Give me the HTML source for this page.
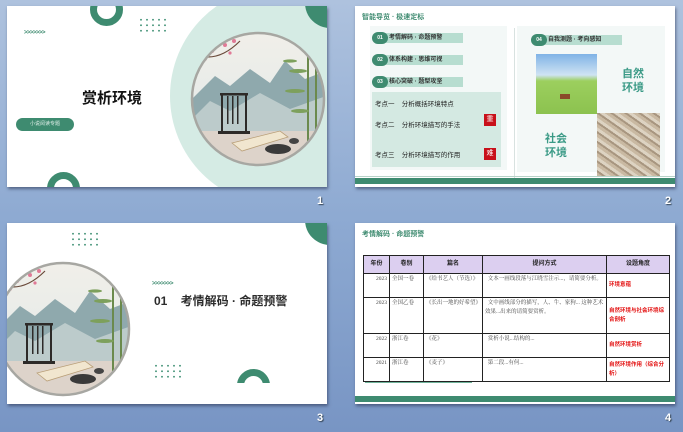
<!DOCTYPE html>
<html><head><meta charset="utf-8"><style>
*{margin:0;padding:0;box-sizing:border-box}
body{width:683px;height:432px;overflow:hidden;background:linear-gradient(180deg,#aec2de 0%,#8eaad2 50%,#7895c4 100%);font-family:"Liberation Sans","Noto Sans CJK SC",sans-serif;position:relative}
.s{position:absolute;width:320px;height:181px;background:#fff;overflow:hidden;box-shadow:1px 2px 3px rgba(40,50,80,.6)}
.a{position:absolute}
.num{position:absolute;color:#fff;font-weight:bold;font-size:11px;text-shadow:1px 1px 1px #345}
.ring{position:absolute;border-radius:50%;border:7px solid #3e8b70}
.dots{position:absolute;background-image:radial-gradient(circle,#4f9a80 0.8px,transparent 1.1px);background-size:6px 5.5px}
.arr{position:absolute;color:#3e8b70;font-size:6px;font-weight:bold;letter-spacing:-0.5px}
.pill{position:absolute;height:10px;background:#b7ddd0;font-size:6px;font-weight:bold;color:#333;line-height:10px;padding-left:17px;border-radius:5px 0 0 5px;white-space:nowrap}
.pill b{position:absolute;left:0;top:-1px;width:16px;height:12px;border-radius:6px;background:#3e8b70;color:#fff;font-size:5px;text-align:center;line-height:12px}
.k{position:absolute;font-size:6.5px;color:#222}
.red{position:absolute;width:12px;height:12px;background:#c8101a;color:#fff;font-size:7px;text-align:center;line-height:12px}
table{border-collapse:collapse;position:absolute;left:8px;top:32px;width:307px;font-size:5.5px;color:#444;font-family:"Liberation Serif","Noto Serif CJK SC",serif}
td,th{border:1.3px solid #222;vertical-align:top;padding:1px 2px;line-height:9px}
th{background:#dccff0;color:#222;font-size:6px;height:18px;vertical-align:middle;font-family:"Liberation Sans","Noto Sans CJK SC",sans-serif}
.r{color:#e31010;font-weight:bold;font-family:"Liberation Sans","Noto Sans CJK SC",sans-serif;vertical-align:middle}
</style></head><body>

<svg width="0" height="0" style="position:absolute"><defs>
<clipPath id="cp"><circle cx="68" cy="68" r="66"/></clipPath>
<linearGradient id="sky" x1="0" y1="0" x2="0" y2="1"><stop offset="0" stop-color="#f1efe9"/><stop offset="0.6" stop-color="#e6ebe9"/><stop offset="1" stop-color="#ddd6cf"/></linearGradient>
<g id="paint">
<g clip-path="url(#cp)">
<rect width="136" height="136" fill="url(#sky)"/>
<path d="M0 70 L25 45 L40 55 L60 38 L80 52 L95 30 L115 48 L136 40 V110 H0Z" fill="#8fa9ad"/>
<path d="M0 90 L20 70 L40 80 L70 62 L100 78 L136 65 V120 H0Z" fill="#bccbcb"/>
<rect y="100" width="136" height="36" fill="#ddd3ca"/>
<path d="M10 25 Q30 30 50 10 M20 22 L35 5" stroke="#6a4a3a" stroke-width="1.2" fill="none"/>
<g fill="#e07a96"><circle cx="22" cy="20" r="2"/><circle cx="35" cy="14" r="2"/><circle cx="44" cy="10" r="2"/><circle cx="28" cy="8" r="1.8"/><circle cx="15" cy="28" r="1.8"/><circle cx="40" cy="22" r="1.6"/></g>
<g stroke="#6b8a4d" stroke-width="2"><line x1="118" y1="20" x2="118" y2="110"/><line x1="126" y1="30" x2="126" y2="115"/></g>
<g fill="#7da05c"><ellipse cx="108" cy="40" rx="9" ry="2"/><ellipse cx="105" cy="60" rx="10" ry="2"/><ellipse cx="110" cy="80" rx="9" ry="2"/><ellipse cx="100" cy="30" rx="7" ry="1.6"/></g>
<g fill="#2d2a28"><rect x="30" y="62" width="28" height="2.5"/><rect x="31" y="62" width="2" height="40"/><rect x="55" y="62" width="2" height="40"/><rect x="37" y="65" width="1.5" height="28"/><rect x="42" y="65" width="1.5" height="28"/><rect x="47" y="65" width="1.5" height="28"/><rect x="28" y="100" width="32" height="3"/></g>
<path d="M42 112 L90 100 L98 106 L52 120Z" fill="#f1e6cf" stroke="#b99f78" stroke-width="0.8"/>
<ellipse cx="88" cy="118" rx="13" ry="5" fill="#3a3a3a"/>
<ellipse cx="104" cy="110" rx="5" ry="3" fill="#444"/>
</g>
<circle cx="68" cy="68" r="66" fill="none" stroke="#a7a7a2" stroke-width="2.5"/>
</g></defs></svg>

<!-- Slide 1 -->
<div class="s" style="left:7px;top:6px">
  <div class="a" style="left:163px;top:-20px;width:220px;height:220px;border-radius:50%;background:#d5ebe4"></div>
  <svg class="a" style="left:183px;top:25px" width="136" height="136"><use href="#paint"/></svg>
  <div class="a" style="left:298px;top:-28px;width:50px;height:50px;border-radius:50%;background:#3e8b70"></div>
  <div class="ring" style="left:83px;top:-13px;width:33px;height:33px"></div>
  <div class="ring" style="left:40px;top:166px;width:33px;height:33px"></div>
  <div class="dots" style="left:131px;top:11px;width:32px;height:18px"></div>
  <div class="arr" style="left:17px;top:24px">&gt;&gt;&gt;&gt;&gt;&gt;&gt;</div>
  <div class="a" style="left:75px;top:81px;font-size:15px;font-weight:bold;color:#111">赏析环境</div>
  <div class="a" style="left:9px;top:112px;width:58px;height:13px;border-radius:7px;background:#3e8b70;color:#e0efe9;font-size:5px;line-height:13px;text-align:center">小说阅读专题</div>
</div>
<div class="num" style="left:317px;top:195px">1</div>

<!-- Slide 2 -->
<div class="s" style="left:355px;top:6px">
  <div class="a" style="left:7px;top:6px;font-size:7px;font-weight:bold;color:#3e8b70">智能导览 · 极速定标</div>
  <div class="a" style="left:15px;top:20px;width:137px;height:144px;background:#f3f8f7"></div>
  <div class="a" style="left:159px;top:22px;width:1px;height:150px;background:#d8e2e0"></div>
  <div class="a" style="left:162px;top:20px;width:148px;height:146px;background:#f3f8f7"></div>
  <div class="pill" style="left:17px;top:27px;width:91px"><b>01</b>考情解码 · 命题预警</div>
  <div class="pill" style="left:17px;top:49px;width:91px"><b>02</b>体系构建 · 思维可视</div>
  <div class="pill" style="left:17px;top:71px;width:91px"><b>03</b>核心突破 · 题型攻坚</div>
  <div class="a" style="left:17px;top:86px;width:129px;height:75px;background:#d4e9e2"></div>
  <div class="k" style="left:20px;top:92px">考点一&nbsp;&nbsp;&nbsp;&nbsp;分析概括环境特点</div>
  <div class="k" style="left:20px;top:113px">考点二&nbsp;&nbsp;&nbsp;&nbsp;分析环境描写的手法</div>
  <div class="k" style="left:20px;top:143px">考点三&nbsp;&nbsp;&nbsp;&nbsp;分析环境描写的作用</div>
  <div class="red" style="left:129px;top:108px">重</div>
  <div class="red" style="left:129px;top:142px">难</div>
  <div class="pill" style="left:176px;top:29px;width:91px"><b>04</b>自我测题 · 考向感知</div>
  <div class="a" style="left:181px;top:48px;width:61px;height:60px;background:linear-gradient(180deg,#7fb3e6 0%,#cfe3f3 35%,#9ccf5e 45%,#8cc24f 100%)"><div class="a" style="left:24px;top:40px;width:10px;height:5px;background:#8a4a2a"></div></div>
  <div class="a" style="left:267px;top:61px;font-size:11px;font-weight:bold;color:#3a9a86;line-height:14px">自然<br>环境</div>
  <div class="a" style="left:242px;top:107px;width:63px;height:63px;background:repeating-linear-gradient(35deg,#c9b9a2 0 3px,#a89680 3px 5px,#ddd3c2 5px 8px)"></div>
  <div class="a" style="left:190px;top:126px;font-size:11px;font-weight:bold;color:#3a9a86;line-height:14px">社会<br>环境</div>
  <div class="a" style="left:0;top:170px;width:320px;height:1px;background:#b8d3c9"></div>
  <div class="a" style="left:0;top:172px;width:320px;height:6px;background:#3e8b70"></div>
</div>
<div class="num" style="left:665px;top:195px">2</div>

<!-- Slide 3 -->
<div class="s" style="left:7px;top:223px">
  <svg class="a" style="left:-12px;top:38px" width="136" height="136"><use href="#paint"/></svg>
  <div class="a" style="left:298px;top:-28px;width:50px;height:50px;border-radius:50%;background:#3e8b70"></div>
  <div class="dots" style="left:63px;top:8px;width:32px;height:18px"></div>
  <div class="dots" style="left:146px;top:140px;width:32px;height:18px"></div>
  <div class="arr" style="left:145px;top:58px">&gt;&gt;&gt;&gt;&gt;&gt;&gt;</div>
  <div class="a" style="left:147px;top:69px;font-size:12px;font-weight:bold;color:#2c2c2c;white-space:nowrap">01&nbsp;&nbsp;&nbsp;&nbsp;考情解码 · 命题预警</div>
  <div class="a" style="left:230px;top:146px;width:33px;height:14px;overflow:hidden"><div class="ring" style="left:0;top:0;width:33px;height:33px"></div></div>
</div>
<div class="num" style="left:317px;top:412px">3</div>

<!-- Slide 4 -->
<div class="s" style="left:355px;top:223px">
  <div class="a" style="left:7px;top:6px;font-size:7px;font-weight:bold;color:#3e8b70">考情解码 · 命题预警</div>
  <table>
    <tr><th style="width:26px">年份</th><th style="width:34px">卷别</th><th style="width:59px">篇名</th><th style="width:124px">提问方式</th><th>设题角度</th></tr>
    <tr style="height:24px"><td style="text-align:right">2023</td><td>全国一卷</td><td>《给书艺人（节选）》</td><td>&nbsp;&nbsp;文本一画线段落与江晓雪注示...，请简要分析。</td><td class="r">环境意蕴</td></tr>
    <tr style="height:36px"><td style="text-align:right">2023</td><td>全国乙卷</td><td>《长出一地的好希望》</td><td>&nbsp;&nbsp;文中画线部分的描写，人、牛、家狗... 这种艺术效果...出来的请简要赏析。</td><td class="r">自然环境与社会环境综合剖析</td></tr>
    <tr style="height:24px"><td style="text-align:right">2022</td><td>浙江卷</td><td>《花》</td><td>&nbsp;&nbsp;赏析小说...结构的...</td><td class="r">自然环境赏析</td></tr>
    <tr style="height:24px"><td style="text-align:right">2021</td><td>浙江卷</td><td>《麦子》</td><td>&nbsp;&nbsp;第二段...有何...</td><td class="r">自然环境作用（综合分析）</td></tr>
  </table>
  <div class="a" style="left:10px;top:159px;width:107px;height:1px;background:#6fb39a"></div>
  <div class="a" style="left:0;top:173px;width:320px;height:6px;background:#3e8b70"></div>
</div>
<div class="num" style="left:665px;top:412px">4</div>
</body></html>
